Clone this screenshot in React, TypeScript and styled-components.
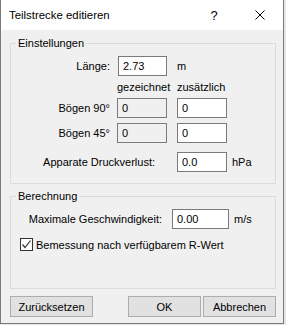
import React, { useState } from "react";
import styled, { createGlobalStyle } from "styled-components";

const GlobalStyle = createGlobalStyle`
  html, body {
    margin: 0;
    padding: 0;
    background: #e6e6e6;
  }
  body {
    font-family: "Liberation Sans", Arial, sans-serif;
    font-size: 11px;
    color: #000;
  }
`;

const Window = styled.div`
  width: 284px;
  height: 324px;
  box-sizing: border-box;
  border: 1px solid #7a7a7a;
  border-top: none;
  background: #f0f0f0;
  display: flex;
  flex-direction: column;
`;

const TitleBar = styled.div`
  height: 30px;
  background: #fff;
  display: flex;
  align-items: center;
`;

const Title = styled.div`
  flex: 1;
  padding-left: 8px;
  padding-bottom: 1px;
  font-size: 11.4px;
`;

const CaptionButton = styled.div`
  width: 46px;
  height: 30px;
  display: flex;
  align-items: center;
  justify-content: center;
  font-size: 13px;
`;

const Body = styled.div`
  padding: 13px 7px 0 9px;
  display: flex;
  flex-direction: column;
`;

const GroupBox = styled.div<{ $height: number }>`
  position: relative;
  height: ${(p) => p.$height}px;
  box-sizing: border-box;
  border: 1px solid #dcdcdc;
  & + & {
    margin-top: 12px;
  }
`;

const Legend = styled.span`
  position: absolute;
  top: -9px;
  left: 5px;
  padding: 0 2px;
  background: #f0f0f0;
  line-height: 16px;
`;

const Grid = styled.div`
  display: grid;
  grid-template-columns: 106px 50px 60px auto;
  padding-top: 12px;
`;

const Label = styled.div<{ $span?: number; $pr?: number }>`
  grid-column: span ${(p) => p.$span || 1};
  display: flex;
  align-items: center;
  justify-content: flex-end;
  padding-right: ${(p) => p.$pr ?? 7}px;
  white-space: nowrap;
`;

const Cell = styled.div<{ $ml?: number }>`
  display: flex;
  align-items: center;
  margin-left: ${(p) => p.$ml ?? 0}px;
  white-space: nowrap;
`;

const Header = styled.div<{ $align: "left" | "right"; $ml?: number }>`
  height: 16px;
  line-height: 16px;
  white-space: nowrap;
  text-align: ${(p) => p.$align};
  margin: 3px 0 3px ${(p) => p.$ml ?? 0}px;
`;

const RowGap = styled.div<{ $h: number }>`
  grid-column: 1 / -1;
  height: ${(p) => p.$h}px;
`;

const Input = styled.input<{ $w?: number }>`
  width: ${(p) => p.$w ?? 50}px;
  height: 20px;
  box-sizing: border-box;
  border: 1px solid #7a7a7a;
  background: ${(p) => (p.readOnly ? "#f0f0f0" : "#fff")};
  padding: 0 0 0 4px;
  margin: 0;
  font: inherit;
  color: #000;
  outline: none;
`;

const Unit = styled.span`
  margin-left: 5px;
  white-space: nowrap;
`;

const SpeedRow = styled.div`
  display: flex;
  align-items: center;
  padding-top: 12px;
`;

const SpeedLabel = styled.div`
  width: 151px;
  text-align: right;
  margin-right: 10px;
  white-space: nowrap;
`;

const CheckRow = styled.label`
  display: flex;
  align-items: center;
  margin: 9px 0 0 9px;
  gap: 3px;
  white-space: nowrap;
`;

const CheckBox = styled.span`
  width: 13px;
  height: 13px;
  box-sizing: border-box;
  border: 1px solid #333;
  background: #fff;
  display: flex;
  align-items: center;
  justify-content: center;
`;

const ButtonRow = styled.div`
  display: flex;
  margin-top: 7px;
`;

const Button = styled.button<{ $w: number; $ml?: number }>`
  width: ${(p) => p.$w}px;
  height: 21px;
  margin-left: ${(p) => p.$ml ?? 0}px;
  box-sizing: border-box;
  border: 1px solid #adadad;
  background: #e1e1e1;
  font: inherit;
  color: #000;
  padding: 0;
`;

export default function App() {
  const [length, setLength] = useState("2.73");
  const [b90, setB90] = useState("0");
  const [b45, setB45] = useState("0");
  const [loss, setLoss] = useState("0.0");
  const [speed, setSpeed] = useState("0.00");
  const [checked, setChecked] = useState(true);

  return (
    <>
      <GlobalStyle />
      <Window>
        <TitleBar>
          <Title>Teilstrecke editieren</Title>
          <CaptionButton>?</CaptionButton>
          <CaptionButton>
            <svg width="10" height="10" viewBox="0 0 10 10">
              <path d="M0.5 0.5 L9.5 9.5 M9.5 0.5 L0.5 9.5" stroke="#000" strokeWidth="1" />
            </svg>
          </CaptionButton>
        </TitleBar>
        <Body>
          <GroupBox $height={141}>
            <Legend>Einstellungen</Legend>
            <Grid>
              <Label>Länge:</Label>
              <Cell $ml={1}>
                <Input $w={49} value={length} onChange={(e) => setLength(e.target.value)} />
              </Cell>
              <Cell $ml={10}>m</Cell>
              <div />

              <div />
              <Header $align="right">gezeichnet</Header>
              <Header $align="left" $ml={10}>zusätzlich</Header>
              <div />

              <Label>Bögen 90°</Label>
              <Cell>
                <Input readOnly value="0" />
              </Cell>
              <Cell $ml={10}>
                <Input value={b90} onChange={(e) => setB90(e.target.value)} />
              </Cell>
              <div />
              <RowGap $h={5} />

              <Label>Bögen 45°</Label>
              <Cell>
                <Input readOnly value="0" />
              </Cell>
              <Cell $ml={10}>
                <Input value={b45} onChange={(e) => setB45(e.target.value)} />
              </Cell>
              <div />
              <RowGap $h={9} />

              <Label $span={2} $pr={12}>Apparate Druckverlust:</Label>
              <Cell $ml={10}>
                <Input value={loss} onChange={(e) => setLoss(e.target.value)} />
              </Cell>
              <Cell>
                <Unit>hPa</Unit>
              </Cell>
            </Grid>
          </GroupBox>
          <GroupBox $height={93}>
            <Legend>Berechnung</Legend>
            <SpeedRow>
              <SpeedLabel>Maximale Geschwindigkeit:</SpeedLabel>
              <Input $w={57} value={speed} onChange={(e) => setSpeed(e.target.value)} />
              <Unit>m/s</Unit>
            </SpeedRow>
            <CheckRow onClick={() => setChecked((c) => !c)}>
              <CheckBox>
                {checked && (
                  <svg width="11" height="11" viewBox="0 0 11 11">
                    <path d="M1.5 5.5 L4 8.5 L9.5 1.5" fill="none" stroke="#333" strokeWidth="1.2" />
                  </svg>
                )}
              </CheckBox>
              Bemessung nach verfügbarem R-Wert
            </CheckRow>
          </GroupBox>
          <ButtonRow>
            <Button $w={83}>Zurücksetzen</Button>
            <Button $w={73} $ml={35}>OK</Button>
            <Button $w={73} $ml={2}>Abbrechen</Button>
          </ButtonRow>
        </Body>
      </Window>
    </>
  );
}
